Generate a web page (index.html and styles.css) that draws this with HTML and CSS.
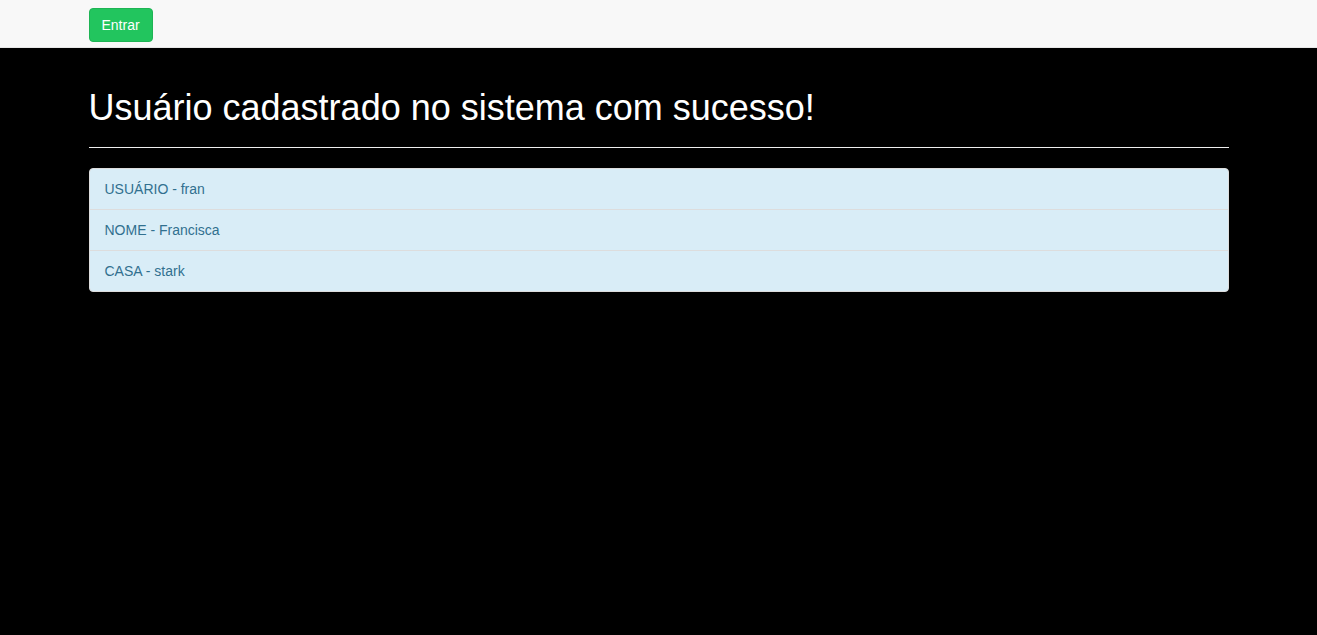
FILE: index.html
```html
<!DOCTYPE html>
<html lang="pt">
<head>
<meta charset="utf-8">
<title>Cadastro</title>
<link rel="stylesheet" href="styles.css">
</head>
<body>
<nav class="navbar">
  <div class="container">
    <button class="btn-entrar" type="button">Entrar</button>
  </div>
</nav>
<main class="container main">
  <h1 class="page-title">Usuário cadastrado no sistema com sucesso!</h1>
  <ul class="list-group">
    <li class="list-item">USUÁRIO - fran</li>
    <li class="list-item">NOME - Francisca</li>
    <li class="list-item">CASA - stark</li>
  </ul>
</main>
</body>
</html>
```
FILE: styles.css
```css
* { box-sizing: border-box; }
html, body { margin: 0; padding: 0; }
body {
  background: #000;
  font-family: "Liberation Sans", Arial, sans-serif;
  font-size: 14px;
  line-height: 20px;
  color: #333;
  min-height: 635px;
}
.container {
  width: 1170px;
  margin: 0 auto;
  padding: 0 15px;
}
.navbar {
  background: #f8f8f8;
  height: 48px;
  border-bottom: 1px solid #e7e7e7;
}
.navbar .container {
  padding-top: 8px;
}
.btn-entrar {
  height: 34px;
  padding: 6px 12px;
  font-family: inherit;
  font-size: 14px;
  line-height: 20px;
  color: #fff;
  background: #22c55e;
  border: 1px solid #1eb454;
  border-radius: 4px;
  cursor: pointer;
}
.main {
  padding-top: 40px;
}
.page-title {
  margin: 0;
  font-size: 36px;
  font-weight: 500;
  line-height: 40px;
  color: #fff;
  padding-bottom: 19px;
  border-bottom: 1px solid #eee;
}
.list-group {
  list-style: none;
  margin: 20px 0 0;
  padding: 0;
}
.list-item {
  background: #d9edf7;
  color: #31708f;
  padding: 10px 15px;
  border: 1px solid #ddd;
  margin-bottom: -1px;
}
.list-item:first-child {
  border-top-left-radius: 4px;
  border-top-right-radius: 4px;
}
.list-item:last-child {
  margin-bottom: 0;
  border-bottom-left-radius: 4px;
  border-bottom-right-radius: 4px;
}
```
